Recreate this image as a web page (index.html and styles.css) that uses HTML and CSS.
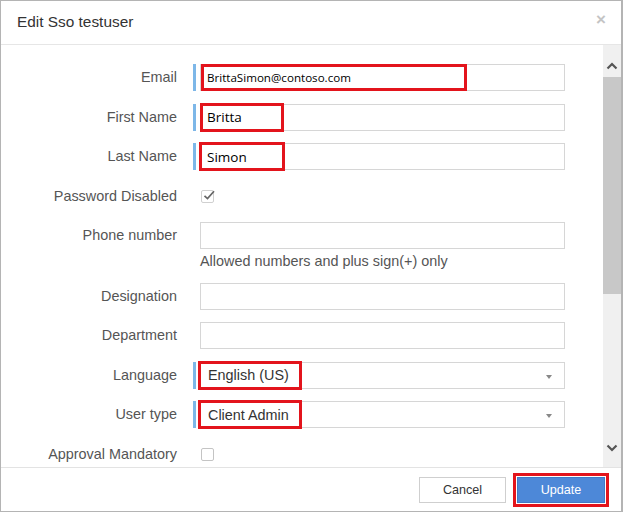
FILE: index.html
```html
<!DOCTYPE html>
<html>
<head>
<meta charset="utf-8">
<link rel="stylesheet" href="styles.css">
</head>
<body>
<div class="dialog">
  <div class="header">
    <span class="title">Edit Sso testuser</span>
    <span class="close">&times;</span>
  </div>
  <div class="body">
    <div class="form">
      <div class="row">
        <label class="label">Email</label>
        <div class="field req">
          <span class="bar"></span>
          <div class="input seg-sm">BrittaSimon@contoso.com</div>
          <span class="mark mark-email"></span>
        </div>
      </div>
      <div class="row">
        <label class="label">First Name</label>
        <div class="field req">
          <span class="bar"></span>
          <div class="input seg">Britta</div>
          <span class="mark mark-first"></span>
        </div>
      </div>
      <div class="row">
        <label class="label">Last Name</label>
        <div class="field req">
          <span class="bar"></span>
          <div class="input seg">Simon</div>
          <span class="mark mark-last"></span>
        </div>
      </div>
      <div class="row">
        <label class="label">Password Disabled</label>
        <div class="field">
          <span class="bar"></span>
          <span class="check checked">
            <svg width="14" height="13" viewBox="0 0 14 13"><path d="M2.5 6.8 L5.5 9.6 L12 2.2" fill="none" stroke="#666" stroke-width="1.7"/></svg>
          </span>
        </div>
      </div>
      <div class="row">
        <label class="label">Phone number</label>
        <div class="field col">
          <div class="line">
            <span class="bar"></span>
            <div class="input"></div>
          </div>
          <div class="help">Allowed numbers and plus sign(+) only</div>
        </div>
      </div>
      <div class="row">
        <label class="label">Designation</label>
        <div class="field">
          <span class="bar"></span>
          <div class="input"></div>
        </div>
      </div>
      <div class="row">
        <label class="label">Department</label>
        <div class="field">
          <span class="bar"></span>
          <div class="input"></div>
        </div>
      </div>
      <div class="row">
        <label class="label">Language</label>
        <div class="field req">
          <span class="bar"></span>
          <div class="input select">English (US)<span class="caret"></span></div>
          <span class="mark mark-sel"></span>
        </div>
      </div>
      <div class="row">
        <label class="label">User type</label>
        <div class="field req">
          <span class="bar"></span>
          <div class="input select">Client Admin<span class="caret"></span></div>
          <span class="mark mark-sel"></span>
        </div>
      </div>
      <div class="row">
        <label class="label">Approval Mandatory</label>
        <div class="field">
          <span class="bar"></span>
          <span class="check"></span>
        </div>
      </div>
    </div>
    <div class="scrollbar">
      <div class="arrow">
        <svg width="12" height="8" viewBox="0 0 12 8"><path d="M1.5 6.5 L6 2 L10.5 6.5" fill="none" stroke="#555" stroke-width="2.2"/></svg>
      </div>
      <div class="thumb"></div>
      <div class="track"></div>
      <div class="arrow">
        <svg width="12" height="8" viewBox="0 0 12 8"><path d="M1.5 1.5 L6 6 L10.5 1.5" fill="none" stroke="#555" stroke-width="2.2"/></svg>
      </div>
    </div>
  </div>
  <div class="footer">
    <button class="btn btn-cancel">Cancel</button>
    <div class="btn-wrap">
      <button class="btn btn-primary">Update</button>
      <span class="mark mark-update"></span>
    </div>
  </div>
</div>
</body>
</html>
```
FILE: styles.css
```css
* { box-sizing: border-box; }
html, body { margin: 0; padding: 0; background: #fff; }
body { font-family: "Liberation Sans", Arial, sans-serif; color: #555; }

.dialog {
  width: 623px;
  height: 512px;
  border: 1px solid #b4b4b4;
  border-right: 2px solid #b4b4b4;
  display: flex;
  flex-direction: column;
  background: #fff;
  overflow: hidden;
}

.header {
  height: 44px;
  flex: none;
  border-bottom: 1px solid #e6e6e6;
  display: flex;
  align-items: center;
  justify-content: space-between;
  padding: 0 16px 2px 16px;
}
.title { font-size: 15.4px; color: #333; }
.close { font-size: 17px; color: #c4c4c4; font-weight: bold; margin-right: -1px; margin-top: -4px; }

.body {
  height: 422px;
  flex: none;
  display: flex;
}
.form {
  flex: 1;
  overflow: hidden;
  padding-top: 19px;
}
.row {
  display: flex;
  align-items: flex-start;
  margin-bottom: 12.5px;
  min-height: 27px;
}
.label {
  width: 176px;
  flex: none;
  text-align: right;
  font-size: 14.4px;
  line-height: 27px;
  color: #555;
}
.field {
  position: relative;
  margin-left: 16px;
  display: flex;
  align-items: center;
  height: 27px;
}
.field.col { flex-direction: column; align-items: flex-start; height: auto; }
.line { display: flex; align-items: center; height: 27px; }
.bar {
  width: 3px;
  height: 27px;
  margin-right: 4px;
  background: transparent;
  flex: none;
}
.req .bar { background: #7db7e8; }
.input {
  width: 365px;
  height: 27px;
  border: 1px solid #d6d6d6;
  background: #fff;
  color: #000;
  display: flex;
  align-items: center;
  padding-left: 6px;
  position: relative;
}
.seg { font-family: "Open Sans", "Noto Sans", sans-serif; font-size: 13.5px; }
.seg-sm { font-family: "Open Sans", "Noto Sans", sans-serif; font-size: 11.6px; }
.select { font-size: 14.4px; color: #333; padding-left: 7px; }
.caret {
  position: absolute;
  right: 12px;
  top: 12px;
  width: 0; height: 0;
  border-left: 3.5px solid transparent;
  border-right: 3.5px solid transparent;
  border-top: 4px solid #888;
}
.help {
  font-size: 14.4px;
  color: #555;
  margin-top: 4px;
  margin-left: 7px;
  line-height: 17px;
}

.check {
  width: 13px;
  height: 13px;
  border: 1px solid #c4c4c4;
  border-radius: 2px;
  margin-left: 1px;
  display: block;
  position: relative;
}
.check svg { position: absolute; left: 0; top: -2px; }
.check.checked { border-color: #d0d0d0; }

.mark {
  position: absolute;
  border: 3px solid #e3141c;
  pointer-events: none;
}
.mark-email { left: 8px; top: 0; width: 266px; height: 27px; }
.mark-first { left: 7px; top: -1px; width: 84px; height: 29px; }
.mark-last { left: 6px; top: -1px; width: 86px; height: 29px; }
.mark-sel { left: 5px; top: -1px; width: 104px; height: 29px; }

.scrollbar {
  width: 18px;
  flex: none;
  background: #f0f0f0;
  display: flex;
  flex-direction: column;
}
.arrow {
  height: 32px;
  display: flex;
  align-items: center;
  justify-content: center;
  flex: none;
}
.arrow:first-child { padding-top: 10px; }
.arrow:last-child { padding-bottom: 6px; }
.thumb { height: 217px; background: #c8c8c8; flex: none; }
.track { flex: 1; }

.footer {
  flex: 1;
  border-top: 1px solid #e3e3e3;
  display: flex;
  align-items: center;
  justify-content: flex-end;
  padding: 0 16px 0 0;
  gap: 11px;
}
.btn {
  font-family: "Liberation Sans", Arial, sans-serif;
  font-size: 12.6px;
  height: 26px;
  border-radius: 0;
  cursor: pointer;
}
.btn-cancel {
  width: 87px;
  background: #fff;
  border: 1px solid #cfcfcf;
  color: #333;
  margin-top: 1px;
}
.btn-wrap { position: relative; display: flex; }
.btn-primary {
  width: 88px;
  background: #4d88d8;
  border: 1px solid #4179c6;
  color: #fff;
}
.mark-update { left: -4px; top: -4px; width: 96px; height: 34px; }
```
